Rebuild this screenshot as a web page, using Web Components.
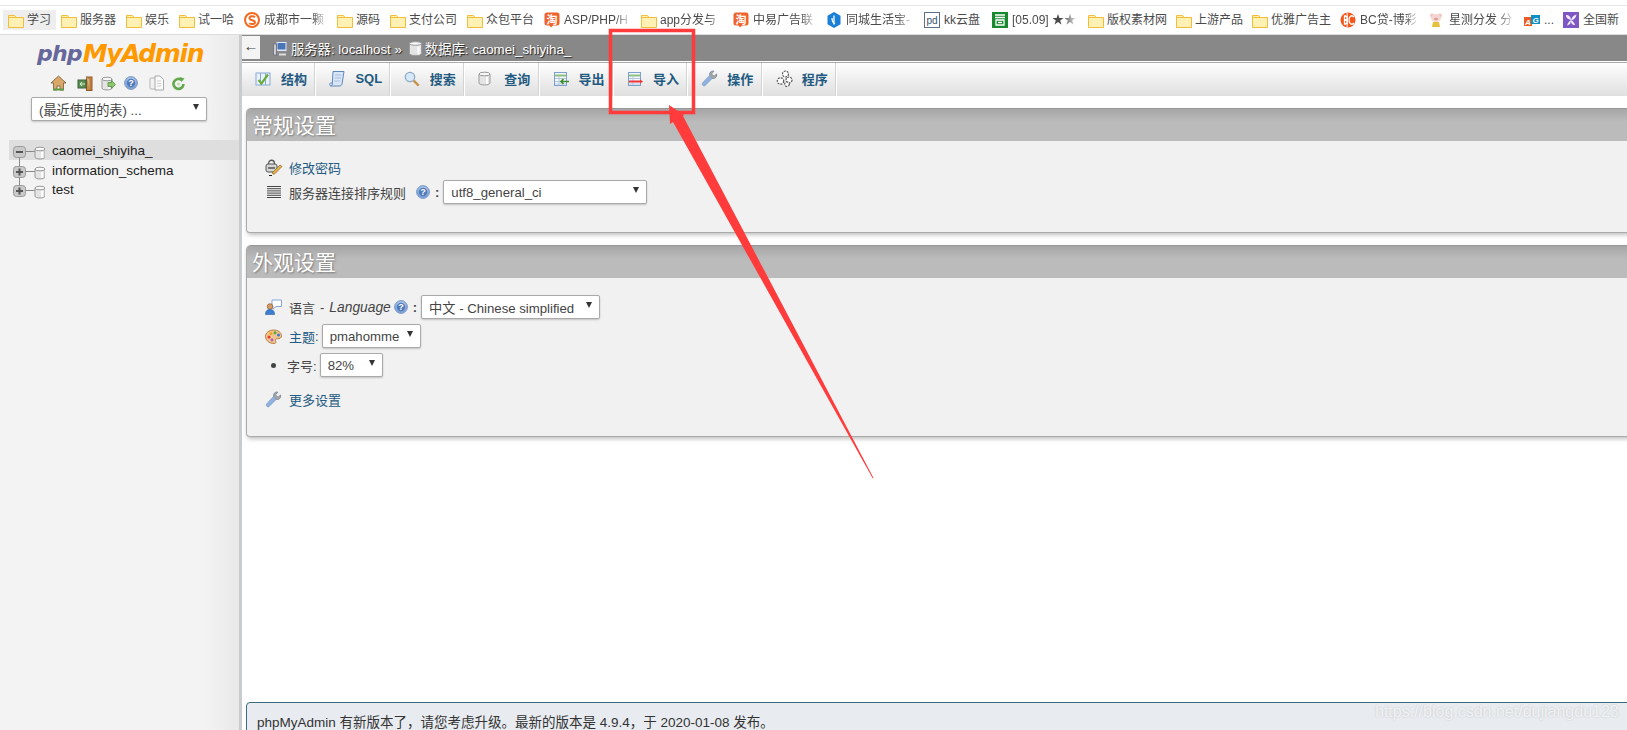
<!DOCTYPE html>
<html lang="zh">
<head>
<meta charset="utf-8">
<title>phpMyAdmin</title>
<style>
html,body{margin:0;height:100%;overflow:hidden;background:#fff}
body{position:relative;display:flex;flex-direction:column;height:730px;font:13px "Liberation Sans","Noto Sans CJK SC",sans-serif;color:#444}
</style>
</head>
<body>
<bookmark-bar>
  <bookmark-item w="53" icon="folder" active>学习</bookmark-item>
  <bookmark-item w="65" icon="folder">服务器</bookmark-item>
  <bookmark-item w="53" icon="folder">娱乐</bookmark-item>
  <bookmark-item w="65" icon="folder">试一哈</bookmark-item>
  <bookmark-item w="93" icon="sogou" fade>成都市一颗</bookmark-item>
  <bookmark-item w="53" icon="folder">源码</bookmark-item>
  <bookmark-item w="77" icon="folder">支付公司</bookmark-item>
  <bookmark-item w="77" icon="folder">众包平台</bookmark-item>
  <bookmark-item w="97" icon="tao" fade>ASP/PHP/H</bookmark-item>
  <bookmark-item w="92" icon="folder" fade>app分发与</bookmark-item>
  <bookmark-item w="93" icon="tao" fade>中易广告联</bookmark-item>
  <bookmark-item w="98" icon="hex" fade>同城生活宝-</bookmark-item>
  <bookmark-item w="68" icon="pd">kk云盘</bookmark-item>
  <bookmark-item w="96" icon="green" fade>[05.09] ★★</bookmark-item>
  <bookmark-item w="88" icon="folder">版权素材网</bookmark-item>
  <bookmark-item w="76" icon="folder">上游产品</bookmark-item>
  <bookmark-item w="88" icon="folder">优雅广告主</bookmark-item>
  <bookmark-item w="89" icon="bc" fade>BC贷-博彩</bookmark-item>
  <bookmark-item w="95" icon="pig" fade>星测分发 分</bookmark-item>
  <bookmark-item w="39" icon="ag">...</bookmark-item>
  <bookmark-item w="72" icon="leaf">全国新</bookmark-item>
</bookmark-bar>

<pma-app>
  <pma-sidebar slot="side">
    <pma-logo></pma-logo>
    <pma-navicons></pma-navicons>
    <pma-select w="176" recent>(最近使用的表) ...</pma-select>
    <pma-tree-row kind="first" active>caomei_shiyiha_</pma-tree-row>
    <pma-tree-row kind="mid">information_schema</pma-tree-row>
    <pma-tree-row kind="last">test</pma-tree-row>
  </pma-sidebar>

  <pma-breadcrumb></pma-breadcrumb>
  <pma-tabs>
    <pma-tab icon="structure">结构</pma-tab>
    <pma-tab icon="sql">SQL</pma-tab>
    <pma-tab icon="search">搜索</pma-tab>
    <pma-tab icon="db">查询</pma-tab>
    <pma-tab icon="export">导出</pma-tab>
    <pma-tab icon="import">导入</pma-tab>
    <pma-tab icon="wrench">操作</pma-tab>
    <pma-tab icon="gears">程序</pma-tab>
  </pma-tabs>

  <pma-section heading="常规设置" pad="14" end="28">
    <pma-row icon="lock" gap="1"><a-link>修改密码</a-link></pma-row>
    <pma-row icon="list">
      服务器连接排序规则<pma-icon name="help" style="margin:0 5px 0 10px"></pma-icon><b style="font-weight:700">:</b>
      <pma-select w="204" style="margin-left:4px">utf8_general_ci</pma-select>
    </pma-row>
  </pma-section>

  <pma-section heading="外观设置" pad="17" end="25">
    <pma-row icon="lang" gap="5">
      语言<span style="margin:0 5px">-</span><i style="font-size:13.800px">Language</i><pma-icon name="help" style="margin:0 5px 0 3px"></pma-icon><b style="font-weight:700">:</b>
      <pma-select w="179" style="margin-left:4px">中文 - Chinese simplified</pma-select>
    </pma-row>
    <pma-row icon="palette" gap="5"><a-link>主题</a-link>:<pma-select w="99" style="margin-left:3px">pmahomme</pma-select></pma-row>
    <pma-row bullet gap="10">字号:<pma-select w="63" style="margin-left:3px">82%</pma-select></pma-row>
    <pma-row icon="wrench"><a-link>更多设置</a-link></pma-row>
  </pma-section>

  <pma-notice>phpMyAdmin 有新版本了，请您考虑升级。最新的版本是 4.9.4，于 2020-01-08 发布。</pma-notice>
</pma-app>

<red-callout></red-callout>
<water-mark>https://blog.csdn.net/dujiangdu123</water-mark>

<script>
// all the little pictures, 16px-ish, hand drawn
const cyl = (x, y, w, h) => `<path d="M${x} ${y+2}v${h-4}c0 2.6 ${w} 2.6 ${w} 0v-${h-4}z" fill="#e4e4e4" stroke="#9a9a9a"/><ellipse cx="${x+w/2}" cy="${y+2}" rx="${w/2}" ry="1.8" fill="#f8f8f8" stroke="#9a9a9a"/><path d="M${x+w-3} ${y+5}v${h-6}" stroke="#fff" stroke-width="2"/>`
const tbl = `<rect x="1.5" y="1.5" width="12" height="13" fill="#f4f8fd" stroke="#7d9fd0"/><path d="M2 4.5h11" stroke="#8fbf7f" stroke-width="2"/><path d="M2 7.5h11M2 10.5h11M2 13h11M6 5v9" stroke="#b5c6e0"/>`
const svg = (w, h, body) => `<svg width="${w}" height="${h}" viewBox="0 0 ${w} ${h}" xmlns="http://www.w3.org/2000/svg">${body}</svg>`
const ICONS = {
    folder: svg(16,15,`<path d="M1 2.5h5.5l1.5 2h7.5v10H.5v-12z" fill="#fff0b4" stroke="#f3bd3c"/><path d="M1 4.5h14.500" stroke="#f3bd3c"/>`),
    sogou: svg(16,16,`<circle cx="8" cy="8" r="7" fill="#fff" stroke="#f2691f" stroke-width="2"/><path d="M11 5.200C9.500 3.800 5.500 4 5.500 6.200c0 2.600 5.500 1.400 5.500 4 0 2.200-4 2.300-5.800 1" fill="none" stroke="#f2691f" stroke-width="2"/>`),
    tao: svg(16,16,`<path d="M3 .5h10a2.500 2.500 0 0 1 2.500 2.500v8a2.500 2.500 0 0 1-2.500 2.500H9l-2 2-1.500-2H3A2.500 2.500 0 0 1 .5 11V3A2.500 2.500 0 0 1 3 .5z" fill="#f0622b"/><text x="8" y="11.500" text-anchor="middle" font-size="11" font-weight="700" fill="#fff" font-family="Noto Sans CJK SC">淘</text>`),
    hex: svg(16,16,`<path d="M8 0l6.500 3.700v8.600L8 16l-6.500-3.700V3.700z" fill="#1a7fd6"/><path d="M8 3.500v9M6 6c0 3 1 5 3 6" stroke="#fff" stroke-width="1.300" fill="none"/>`),
    pd: svg(16,16,`<rect x=".5" y=".5" width="15" height="15" fill="#fff" stroke="#5d7286"/><text x="8" y="11.500" text-anchor="middle" font-size="10" fill="#34516b" font-family="Liberation Sans">pd</text>`),
    green: svg(16,16,`<rect width="16" height="16" fill="#18892f"/><path d="M3 3h10M3 5.500h10M4 8h8v5H4zM6 10.500h4" stroke="#fff" stroke-width="1.300" fill="none"/>`),
    bc: svg(16,16,`<circle cx="8" cy="8" r="7.500" fill="#f4561c"/><path d="M7.200 1v14" stroke="#fff"/><path d="M5 4h-.5v8H5c3 0 3-4 0-4 3 0 3-4 0-4zM14 5c-2-2.500-5-1-5 3s3 5.500 5 3" fill="none" stroke="#fff" stroke-width="1.300"/>`),
    pig: svg(14,16,`<circle cx="3" cy="3.500" r="2" fill="#efc4bf"/><circle cx="11" cy="3.500" r="2" fill="#efc4bf"/><ellipse cx="7" cy="6" rx="5" ry="4" fill="#f5d6d0"/><ellipse cx="7" cy="7" rx="2" ry="1.300" fill="#dd9c96"/><path d="M4 10h6l1 5H3z" fill="#e7c03c"/>`),
    ag: svg(16,16,`<rect x="0" y="5" width="8" height="9" fill="#ee5a24"/><rect x="7" y="3" width="9" height="9" fill="#0d8fc4"/><text x="4" y="12.500" text-anchor="middle" font-size="8" font-style="italic" font-weight="700" fill="#fff" font-family="Liberation Sans">A</text><text x="11.500" y="10.500" text-anchor="middle" font-size="8" font-style="italic" font-weight="700" fill="#fff" font-family="Liberation Sans">G</text>`),
    leaf: svg(16,16,`<rect width="16" height="16" fill="#7e57c2"/><path d="M8 8C4 7 3 5 3 3c3 0 5 2 5 5zm0 0c1-3 3-5 5.500-5.500C13 6 11 8 8 8zm0 0c-2 1-3 3-4 5.500C7 13 8 11 8 8zm0 0c2 1 3 2.500 4 5-3 0-4-2-4-5z" fill="#f2edfa"/>`),
    home: svg(17,16,`<path d="M8.500 1L1 8h2.500v7h3.500v-4h3v4h3.500V8H16z" fill="#d9a86a" stroke="#77582f" stroke-width=".8"/><path d="M3 14.500h11" stroke="#5c9a45" stroke-width="2"/>`),
    exit: svg(16,15,`<rect x="9.500" y="1" width="5.500" height="13.500" fill="#c98a4a" stroke="#8a5a27"/><path d="M9.500 1L13 3v11" fill="#e2b27c" stroke="#8a5a27" stroke-width=".6"/><rect x="1" y="4" width="8" height="8" fill="#5d8f55" stroke="#3b6136"/><path d="M3 8h5M5 6L3 8l2 2" stroke="#dcefd0" fill="none"/>`),
    dbarrow: svg(15,15,cyl(1,1,10,13)+`<path d="M7 6.500h3.500V4.500l4 4-4 4v-2H7z" fill="#8ec96d" stroke="#4f8a3c" stroke-width=".8"/>`),
    help: svg(14,14,`<defs><radialGradient id="h" cx=".5" cy=".35"><stop offset="0" stop-color="#cfdcf2"/><stop offset="1" stop-color="#7fa3d8"/></radialGradient></defs><circle cx="7" cy="7" r="6.400" fill="url(#h)" stroke="#7d9bc8"/><circle cx="7" cy="7" r="4.200" fill="#4f79b8"/><text x="7" y="10.200" text-anchor="middle" font-size="9" font-weight="700" fill="#fff" font-family="Liberation Sans">?</text>`),
    docs: svg(16,16,`<rect x="1" y="3" width="8" height="11" rx="1" fill="#f2f2f2" stroke="#b5b5b5"/><path d="M6 1h5l3.500 3.500V15H6z" fill="#fafafa" stroke="#a8a8a8"/><path d="M8 6h4M8 8.500h4M8 11h4" stroke="#cfcfcf"/>`),
    reload: svg(13,15,`<path d="M11.500 8a5 5 0 1 1-1.800-4" fill="none" stroke="#63a84d" stroke-width="2.600"/><path d="M8 1l4.500 1.500L9.500 6z" fill="#63a84d"/><circle cx="6.500" cy="8" r="1.600" fill="#bfe3ae"/>`),
    structure: svg(16,16,`<rect x="1" y="2" width="14" height="12" fill="#e9f1fb" stroke="#88a8d6"/><path d="M5.500 2v12M10.500 2v12" stroke="#88a8d6"/><path d="M3.500 9l3 3.500 6.500-9" fill="none" stroke="#6cae3c" stroke-width="2.200"/>`),
    sql: svg(16,17,`<path d="M4 1.500h11l-2 12.500c-.3 1.500-1.500 2-2.500 2H1.500c1 0 1.700-1 1.800-2z" fill="#d9e6f7" stroke="#5f88bd"/><path d="M1.500 16c-1-1-.8-2.500 0-3h2" fill="none" stroke="#5f88bd"/><path d="M6 5h6.500M5.500 8H12M5.200 11h6" stroke="#a7bfdf"/>`),
    search: svg(16,16,`<circle cx="6" cy="6" r="4.700" fill="#d7e8f8" stroke="#8fa9c4" stroke-width="1.300"/><path d="M9.700 9.700l5 5" stroke="#c9924d" stroke-width="2.500"/>`),
    db: svg(13,15,cyl(1,1,11,13)),
    export: svg(16,15,tbl+`<path d="M16 10.500H8M10.500 8L8 10.500l2.500 2.500" stroke="#3d8f2f" stroke-width="1.700" fill="none"/>`),
    import: svg(16,15,tbl+`<path d="M2 10.500h11" stroke="#e33" stroke-width="2"/><path d="M13 8.500l3 2-3 2z" fill="#e33"/>`),
    wrench: svg(17,17,`<path d="M2 15.500a2 2 0 0 1-.5-2.500l7-7.500c-.5-2.500 1-4.500 3.500-4.500l.8.300-2 2.200.5 2 2 .5 2.200-2 .2.900c0 2.500-2 4-4.500 3.500l-7 7a1.600 1.600 0 0 1-2.200.100z" fill="#8fb2e0" stroke="#7090bd" stroke-width=".6"/><path d="M9 5.500c-.4-2.500 1-4.500 3.500-4.500l.3.300-2 2.200.5 2 2 .5 2.200-2 .2.900c0 2.500-2 4-4.500 3.500z" fill="#a9a9a9" stroke="#888" stroke-width=".6"/>`),
    gears: svg(17,17,`<g fill="#fff" stroke="#555" stroke-width="1.200" stroke-dasharray="2 1"><circle cx="9.500" cy="4" r="3"/><circle cx="13" cy="10" r="3"/><circle cx="4.500" cy="11" r="3.200"/><circle cx="11" cy="14.200" r="2.300"/></g>`),
    lock: svg(18,17,`<rect x="1" y="5" width="11" height="8" rx="2" fill="#d6d6d6" stroke="#555"/><path d="M3.500 5c0-5 6-5 6 0" fill="none" stroke="#555" stroke-width="1.300"/><path d="M3 9h7" stroke="#555" stroke-width="1.500"/><path d="M7 14l8-8 2 1.500-8 8z" fill="#e6b34a" stroke="#8a6620" stroke-width=".7"/><path d="M4 16.500h3" stroke="#222"/>`),
    list: svg(14,12,`<path d="M0 .5h14M0 2.700h14M0 4.900h14M0 7.100h14M0 9.300h14M0 11.500h14" stroke="#333" stroke-width=".9"/>`),
    lang: svg(17,16,`<path d="M7 1h9.500v6.500H11L8 10V7.500H7z" fill="#fff" stroke="#86a7d6"/><circle cx="5" cy="7.500" r="2.800" fill="#d69a63" stroke="#7a5228" stroke-width=".6"/><path d="M.5 15.500c0-4 2-5 4.500-5s4.500 1 4.500 5z" fill="#3f7fd0" stroke="#2a5c9e" stroke-width=".6"/>`),
    palette: svg(17,15,`<path d="M8.500 1C4 1 .5 3.800.5 7.500S4 14.500 9 14.500c2.500 0 2-2 1.500-3s.5-2 2-1.800c2 .2 4-.5 4-3C16.500 3.500 13 1 8.500 1z" fill="#efc48d" stroke="#b98040"/><circle cx="4" cy="8" r="1.500" fill="#e33"/><circle cx="6" cy="4.500" r="1.500" fill="#f3a21f"/><circle cx="10" cy="3.700" r="1.500" fill="#5aa83a"/><circle cx="13.500" cy="6" r="1.500" fill="#3c78d8"/><circle cx="7" cy="11" r="1.400" fill="#b05ad0"/>`),
    server: svg(15,15,`<rect x="3" y=".5" width="11" height="10" fill="#dfe7f2" stroke="#889"/><rect x="4.500" y="2" width="8" height="6.500" fill="#4a76b8"/><rect x=".5" y="3" width="3" height="11" fill="#ccc" stroke="#778"/><path d="M6 13.500h7" stroke="#ddd" stroke-width="2"/>`),
    dbwhite: svg(13,15,cyl(.5,.5,12,14))
}

class PmaIcon extends HTMLElement{
    constructor(){
        super()
        const root = this.attachShadow({mode:"open"})
        root.innerHTML = `<style>:host{display:inline-flex;flex:none;line-height:0}</style>${ICONS[this.getAttribute("name")] ?? ""}`
    }
}

class BookmarkBar extends HTMLElement{
    constructor(){
        super()
        this.attachShadow({mode:"open"}).innerHTML = `
        <style>
        :host{display:flex;flex:none;height:28px;padding-left:3px;margin-top:5px;border-top:1px solid #e6e6e6;border-bottom:1px solid #dcdcdc;overflow:hidden;align-items:flex-start;background:#fff}
        .in{display:flex;height:20px;margin-top:4px}
        </style>
        <div class="in"><slot></slot></div>`
    }
}

class BookmarkItem extends HTMLElement{
    constructor(){
        super()
        const root = this.attachShadow({mode:"open"})
        const icon = this.getAttribute("icon")
        root.innerHTML = `
        <style>
        :host{display:flex;flex:none;box-sizing:border-box;width:${this.getAttribute("w")}px;height:20px;align-items:center;padding-left:5px;font-size:12px;line-height:20px;color:#4a4a4a;white-space:nowrap}
        :host([active]){background:#eeeeee}
        .ic{width:${icon == "folder" ? 19 : 20}px;flex:none;display:flex}
        .tx{flex:1;min-width:0;height:20px;overflow:hidden;padding-right:4px}
        :host([fade]) .tx{-webkit-mask-image:linear-gradient(to right,#000 70%,transparent 95%);mask-image:linear-gradient(to right,#000 70%,transparent 95%)}
        </style>
        <span class="ic"><pma-icon name="${icon}"></pma-icon></span><span class="tx"><slot></slot></span>`
    }
}

class PmaApp extends HTMLElement{
    constructor(){
        super()
        this.attachShadow({mode:"open"}).innerHTML = `
        <style>
        :host{display:flex;flex:1;min-height:0}
        .side{width:239px;flex:none;display:flex}
        .bar{width:3px;flex:none;background:#c9cccf}
        .main{flex:1;min-width:0;display:flex;flex-direction:column;overflow:hidden}
        </style>
        <div class="side"><slot name="side"></slot></div>
        <div class="bar"></div>
        <div class="main"><slot></slot></div>`
    }
}

class PmaSidebar extends HTMLElement{
    constructor(){
        super()
        this.attachShadow({mode:"open"}).innerHTML = `
        <style>
        :host{display:block;flex:1;background:linear-gradient(to right,#f3f3f3 85%,#e9e9e9)}
        </style>
        <slot></slot>`
    }
}

class PmaLogo extends HTMLElement{
    constructor(){
        super()
        this.attachShadow({mode:"open"}).innerHTML = `
        <style>
        :host{display:flex;height:36px;padding-left:37px;align-items:flex-end;font:italic 700 25px/34px "DejaVu Sans",sans-serif;letter-spacing:-1.400px;color:#f90}
        .p{color:#66679a;font-size:22px;letter-spacing:-.800px;margin-right:1px}
        </style>
        <span class="p">php</span><span>MyAdmin</span>`
    }
}

class PmaNavicons extends HTMLElement{
    constructor(){
        super()
        this.attachShadow({mode:"open"}).innerHTML = `
        <style>
        :host{display:flex;height:16px;margin-top:4px;padding-left:50px;align-items:center;gap:7px}
        pma-icon:nth-child(2){margin-right:3px}
        pma-icon:nth-child(4){margin:0 1px}
        pma-icon:nth-child(5){margin-right:4px}
        </style>
        <pma-icon name="home"></pma-icon><pma-icon name="exit"></pma-icon><pma-icon name="dbarrow"></pma-icon><pma-icon name="help"></pma-icon><pma-icon name="docs"></pma-icon><pma-icon name="reload"></pma-icon>`
    }
}

class PmaSelect extends HTMLElement{
    constructor(){
        super()
        this.attachShadow({mode:"open"}).innerHTML = `
        <style>
        :host{display:flex;flex:none;box-sizing:border-box;width:${this.getAttribute("w")}px;height:24px;align-items:center;padding:0 7px;background:#fff;border:1px solid #aaa;border-radius:2px;box-shadow:0 1px 2px rgba(0,0,0,.2);font-size:13.200px;font-style:normal;font-weight:400;color:#444;white-space:nowrap}
        :host([recent]){margin:6px 0 19px 31px}
        span{flex:1}
        i{width:0;height:0;border:3.500px solid transparent;border-top:6px solid #333;border-bottom:0;margin-top:-4px}
        </style>
        <span><slot></slot></span><i></i>`
    }
}

class PmaTreeRow extends HTMLElement{
    constructor(){
        super()
        const kind = this.getAttribute("kind")
        const up = kind == "first" ? "" : `<path d="M10.500 0v6" stroke="#888"/>`
        const down = kind == "last" ? "" : `<path d="M10.500 18v2" stroke="#888"/>`
        const sign = kind == "first" ? `<path d="M7 12h7" stroke="#555" stroke-width="2"/>` : `<path d="M7 12h7M10.500 8.500v7" stroke="#555" stroke-width="2"/>`
        this.attachShadow({mode:"open"}).innerHTML = `
        <style>
        :host{display:flex;height:20px;margin-left:9px;align-items:center;font-size:13.500px;color:#222;white-space:nowrap}
        :host([active]){background:#dedede}
        :host([kind="last"]){margin-top:-1px}
        svg{flex:none;margin-right:7px}
        </style>
        ${svg(36,20,`${up}${down}<rect x="4.500" y="6.500" width="12" height="11" rx="3" fill="#c9c9c9" stroke="#999"/>${sign}<path d="M17 11.500h9" stroke="#888"/>${cyl(26,7,10,12)}`)}
        <slot></slot>`
    }
}

class PmaBreadcrumb extends HTMLElement{
    constructor(){
        super()
        this.attachShadow({mode:"open"}).innerHTML = `
        <style>
        :host{display:flex;flex:none;height:26px;background:#888;align-items:flex-start;font-size:13.300px;color:#fff;white-space:nowrap}
        .back{width:18px;height:23px;margin:1px 13px 0 0;background:#f4f4f4;color:#444;text-align:center;font-size:15px;line-height:20px}
        .t{display:flex;align-items:center;height:26px;text-shadow:1px 1px 1px #222}
        pma-icon{margin-right:3px}
        .g{margin-left:7px}
        </style>
        <div class="back">←</div>
        <div class="t"><pma-icon name="server"></pma-icon>服务器: localhost »<pma-icon class="g" name="dbwhite"></pma-icon>数据库: caomei_shiyiha_</div>`
    }
}

class PmaTabs extends HTMLElement{
    constructor(){
        super()
        this.attachShadow({mode:"open"}).innerHTML = `
        <style>
        :host{display:flex;flex:none;height:33px;border-top:1px solid #fff;box-shadow:inset 0 1px 0 #aaa;padding-top:1px;background:linear-gradient(#fff,#dfdfdf)}
        </style>
        <slot></slot>`
    }
}

class PmaTab extends HTMLElement{
    constructor(){
        super()
        this.attachShadow({mode:"open"}).innerHTML = `
        <style>
        :host{display:flex;box-sizing:border-box;flex:none;width:74.400px;padding:0 0 2px 13px;align-items:center;border-right:1px solid #fff;box-shadow:inset -1px 0 0 #d4d4d4;font-size:13px;font-weight:700;color:#235a81;white-space:nowrap}
        .ic{width:26px;flex:none;display:flex}
        </style>
        <span class="ic"><pma-icon name="${this.getAttribute("icon")}"></pma-icon></span><slot></slot>`
    }
}

class PmaSection extends HTMLElement{
    constructor(){
        super()
        this.attachShadow({mode:"open"}).innerHTML = `
        <style>
        :host{display:block;flex:none;margin:13px -20px 0 4px;background:#f1f1f1;border:1px solid #aaa;border-top:0;border-radius:4px;box-shadow:1px 2px 4px rgba(0,0,0,.25)}
        h2{margin:0;height:32px;padding-left:5px;border-radius:4px 4px 0 0;background:linear-gradient(#a6a6a6,#bbb 40%);box-shadow:0 -1px 0 #999;color:#fff;font-size:21px;font-weight:400;line-height:34px;text-shadow:1px 1px 2px #777}
        .b{padding:${this.getAttribute("pad")}px 0 ${this.getAttribute("end")}px 18px}
        </style>
        <h2>${this.getAttribute("heading")}</h2>
        <div class="b"><slot></slot></div>`
    }
}

class PmaRow extends HTMLElement{
    constructor(){
        super()
        const icon = this.getAttribute("icon")
        const mark = this.hasAttribute("bullet") ? `<b></b>` : icon == "list" ? `<span class="ic" style="padding-left:2px;box-sizing:border-box"><pma-icon name="list"></pma-icon></span>` : `<span class="ic"><pma-icon name="${icon}"></pma-icon></span>`
        this.attachShadow({mode:"open"}).innerHTML = `
        <style>
        :host{display:flex;height:24px;align-items:center;margin-bottom:${this.getAttribute("gap") ?? 0}px;font-size:13px;color:#444;white-space:nowrap}
        .ic{width:24px;flex:none;display:flex}
        b{width:5px;height:5px;border-radius:50%;background:#444;margin:0 11px 0 6px;flex:none}
        </style>
        ${mark}<slot></slot>`
    }
}

class ALink extends HTMLElement{
    constructor(){
        super()
        this.attachShadow({mode:"open"}).innerHTML = `<style>:host{color:#235a81}</style><slot></slot>`
    }
}

class PmaNotice extends HTMLElement{
    constructor(){
        super()
        this.attachShadow({mode:"open"}).innerHTML = `
        <style>
        :host{display:block;flex:none;margin:auto -20px -12px 4px;height:40px;box-sizing:border-box;padding:11px 10px;background:#e8ecf0;border:1px solid #3a6c7c;border-radius:4px 0 0 0;font-size:13.500px;line-height:17px;color:#333;white-space:nowrap}
        </style>
        <slot></slot>`
    }
}

class RedCallout extends HTMLElement{
    constructor(){
        super()
        this.attachShadow({mode:"open"}).innerHTML = `
        <style>
        :host{position:absolute;left:0;top:0;width:1627px;height:730px;pointer-events:none}
        svg{display:block}
        </style>
        <svg width="1627" height="730" viewBox="0 0 1627 730">
          <rect x="610.500" y="30.500" width="83" height="82" fill="none" stroke="#ff3b3b" stroke-width="3.500"/>
          <path d="M669 105L684 115 683 116 873.500 478 872.800 478.500 673 122 670 124z" fill="#ff3b3b"/>
        </svg>`
    }
}

class WaterMark extends HTMLElement{
    constructor(){
        super()
        this.attachShadow({mode:"open"}).innerHTML = `
        <style>
        :host{position:absolute;left:1375px;top:702px;font:16px/20px "Liberation Sans",sans-serif;color:rgba(255,255,255,.7);text-shadow:0 0 2px rgba(0,0,0,.18);white-space:nowrap}
        </style>
        <slot></slot>`
    }
}

customElements.define("pma-icon",PmaIcon)
customElements.define("bookmark-bar",BookmarkBar)
customElements.define("bookmark-item",BookmarkItem)
customElements.define("pma-app",PmaApp)
customElements.define("pma-sidebar",PmaSidebar)
customElements.define("pma-logo",PmaLogo)
customElements.define("pma-navicons",PmaNavicons)
customElements.define("pma-select",PmaSelect)
customElements.define("pma-tree-row",PmaTreeRow)
customElements.define("pma-breadcrumb",PmaBreadcrumb)
customElements.define("pma-tabs",PmaTabs)
customElements.define("pma-tab",PmaTab)
customElements.define("pma-section",PmaSection)
customElements.define("pma-row",PmaRow)
customElements.define("a-link",ALink)
customElements.define("pma-notice",PmaNotice)
customElements.define("red-callout",RedCallout)
customElements.define("water-mark",WaterMark)
</script>
</body>
</html>
